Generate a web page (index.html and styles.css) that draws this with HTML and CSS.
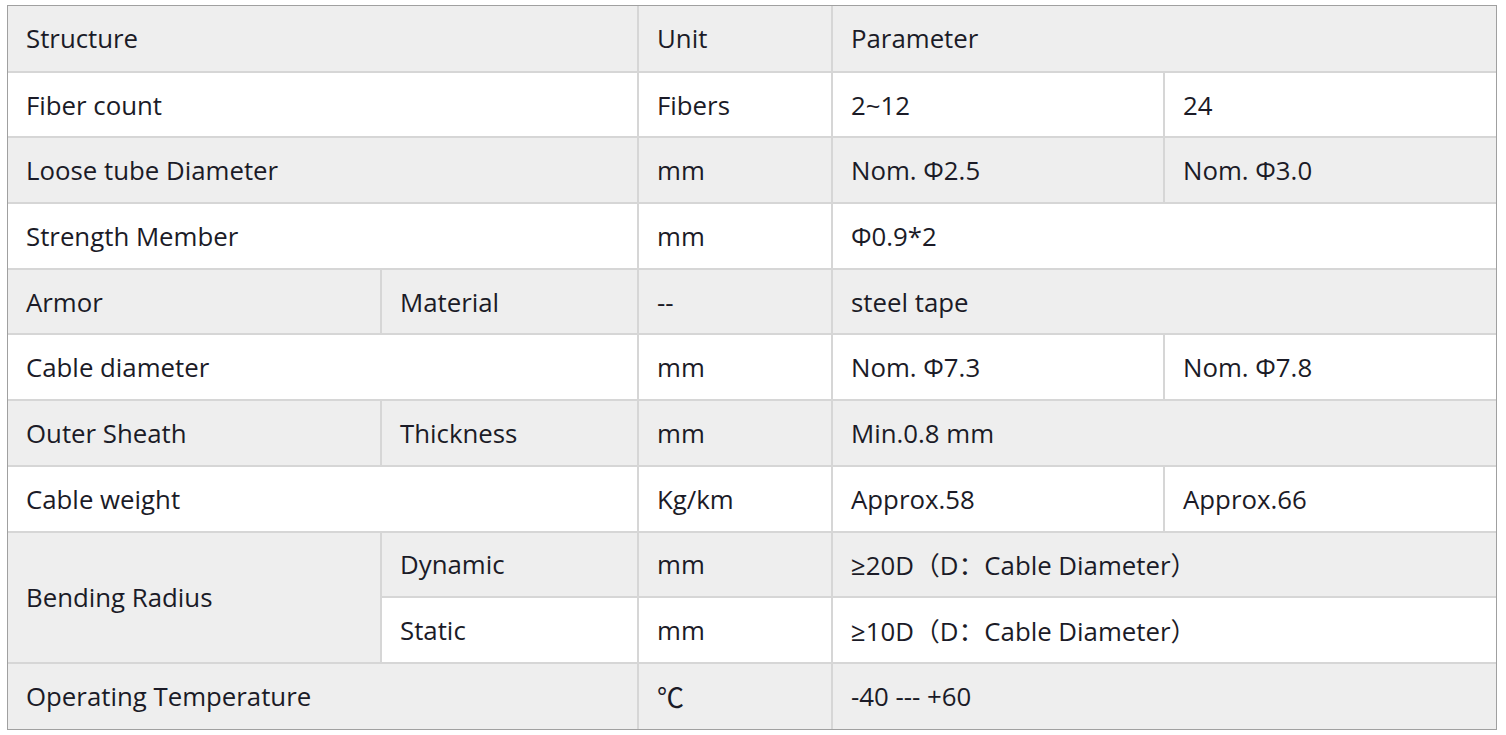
FILE: index.html
```html
<!DOCTYPE html>
<html>
<head>
<meta charset="utf-8">
<link rel="stylesheet" href="styles.css">
</head>
<body>
<div class="wrap">
<table class="spec">
<colgroup>
<col class="c1"><col class="c2"><col class="c3"><col class="c4"><col class="c5">
</colgroup>
<tr class="g"><td colspan="2">Structure</td><td>Unit</td><td colspan="2">Parameter</td></tr>
<tr><td colspan="2">Fiber count</td><td>Fibers</td><td>2~12</td><td>24</td></tr>
<tr class="g"><td colspan="2">Loose tube Diameter</td><td>mm</td><td>Nom. Φ2.5</td><td>Nom. Φ3.0</td></tr>
<tr><td colspan="2">Strength Member</td><td>mm</td><td colspan="2">Φ0.9*2</td></tr>
<tr class="g"><td>Armor</td><td>Material</td><td>--</td><td colspan="2">steel tape</td></tr>
<tr><td colspan="2">Cable diameter</td><td>mm</td><td>Nom. Φ7.3</td><td>Nom. Φ7.8</td></tr>
<tr class="g"><td>Outer Sheath</td><td>Thickness</td><td>mm</td><td colspan="2">Min.0.8 mm</td></tr>
<tr><td colspan="2">Cable weight</td><td>Kg/km</td><td>Approx.58</td><td>Approx.66</td></tr>
<tr class="g"><td rowspan="2">Bending Radius</td><td>Dynamic</td><td>mm</td><td colspan="2">≥20D（D：Cable Diameter）</td></tr>
<tr><td class="w">Static</td><td class="w">mm</td><td class="w" colspan="2">≥10D（D：Cable Diameter）</td></tr>
<tr class="g"><td colspan="2">Operating Temperature</td><td><span class="deg">℃</span></td><td colspan="2">-40 --- +60</td></tr>
</table>
</div>
</body>
</html>
```
FILE: styles.css
```css
html, body { margin: 0; padding: 0; background: #fff; }
body { padding: 5px 0 0 7px; }
.wrap {
  width: 1488px;
  border: 1px solid #a0a0a0;
}
.spec {
  width: 1488px;
  table-layout: fixed;
  border-collapse: collapse;
  border-style: hidden;
  font-family: "Open Sans", "Noto Sans CJK SC", sans-serif;
  font-size: 25.8px;
  color: #1b1b27;
}
.c1 { width: 373px; }
.c2 { width: 257px; }
.c3 { width: 194px; }
.c4 { width: 332px; }
.c5 { width: 332px; }
.spec td {
  border: 2px solid #d6d6d6;
  height: 65.7px;
  padding: 0 0 0 18px;
  box-sizing: border-box;
  vertical-align: middle;
  background: #fff;
  white-space: nowrap;
}
.spec tr.g td { background: #eeeeee; }
.spec tr td.w { background: #fff; }
.deg { font-family: "Noto Sans CJK SC", sans-serif; font-size: 27px; }
```
